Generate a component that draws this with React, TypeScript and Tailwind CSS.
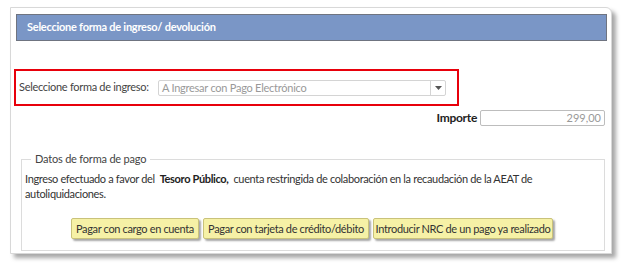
import React from "react";

const font = { fontFamily: "Lato, 'Open Sans', sans-serif" };

function Boton({ children, ancho }: { children: React.ReactNode; ancho: string }) {
  return (
    <button
      type="button"
      className={`${ancho} h-[21px] whitespace-nowrap rounded-[2px] border border-[#c9c27a] bg-[#f6f1a6] text-[11px] leading-none tracking-[-0.35px] text-[#333] shadow-[2px_2px_2px_rgba(0,0,0,0.35)]`}
    >
      {children}
    </button>
  );
}

export default function App() {
  return (
    <div className="h-[264px] w-[622px] bg-white pl-[10px] pt-[7px] text-[#333]" style={font}>
      <div className="h-[247px] w-[602px] rounded-tr-[6px] border border-[#d8d8d8] bg-white pl-[5px] pr-[4px] pt-[6px] shadow-[4px_4px_4px_rgba(0,0,0,0.35)]">
        <div className="flex h-[27px] items-center border border-[#6f7480] bg-[#7a96c6] pl-[10px] text-[11px] font-bold tracking-[-0.25px] text-white">
          Seleccione forma de ingreso/ devolución
        </div>

        <div className="ml-[-2px] mt-[28px] flex h-[37px] w-[445px] items-center border-2 border-[#e8000b] pl-[3px]">
          <label className="w-[139px] whitespace-nowrap text-[11px] tracking-[-0.3px] text-[#444]">Seleccione forma de ingreso:</label>
          <div className="flex h-[16px] w-[288px] items-center rounded-[2px] border border-[#d4d4d4] bg-white">
            <span className="flex-1 whitespace-nowrap pl-[3px] text-[11px] leading-none tracking-[-0.25px] text-[#999]">A Ingresar con Pago Electrónico</span>
            <span className="flex h-full w-[15px] items-center justify-center border-l border-[#d4d4d4]">
              <svg width="7" height="4" viewBox="0 0 7 4">
                <path d="M0 0h7L3.5 4z" fill="#555" />
              </svg>
            </span>
          </div>
        </div>

        <div className="mt-[3px] flex items-center justify-end gap-[3px] pr-[2px]">
          <span className="text-[12px] font-bold tracking-[-0.3px] text-[#222]">Importe</span>
          <div className="flex h-[16px] w-[125px] items-center justify-end rounded-[2px] border border-[#bdbdbd] pr-[3px] text-[11px] text-[#999]">
            299,00
          </div>
        </div>

        <fieldset className="ml-[5px] mt-[25px] h-[99px] w-[584px] border border-[#dcdcdc] px-[3px]">
          <legend className="ml-[6px] px-[4px] text-[11px] leading-[14px] tracking-[-0.2px] text-[#444]">Datos de forma de pago</legend>
          <p className="mt-[5px] whitespace-nowrap text-[11px] leading-[15px] tracking-[-0.35px] text-[#333]">
            Ingreso efectuado a favor del&nbsp; <b className="text-[#222]">Tesoro Público,</b>&nbsp; cuenta restringida de colaboración en la recaudación de la AEAT de
            <br />
            autoliquidaciones.
          </p>
          <div className="mt-[17px] flex gap-[4px] pl-[46px]">
            <Boton ancho="w-[128px]">Pagar con cargo en cuenta</Boton>
            <Boton ancho="w-[166px]">Pagar con tarjeta de crédito/débito</Boton>
            <Boton ancho="w-[180px]">Introducir NRC de un pago ya realizado</Boton>
          </div>
        </fieldset>
      </div>
    </div>
  );
}
